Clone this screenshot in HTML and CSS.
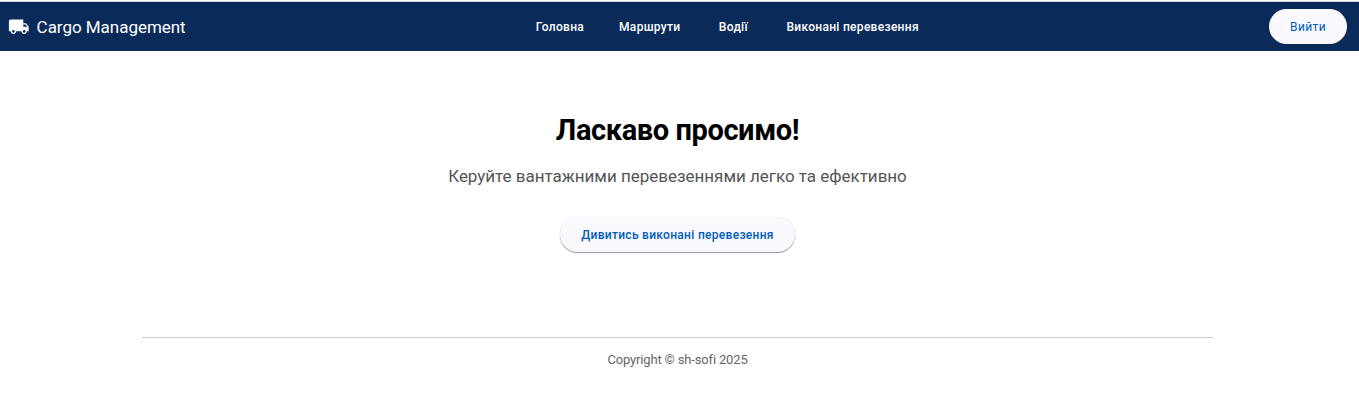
FILE: index.html
```html
<!DOCTYPE html>
<html lang="uk">
<head>
<meta charset="utf-8">
<title>Cargo Management</title>
<link rel="stylesheet" href="styles.css">
</head>
<body>
<header class="toolbar">
  <div class="brand">
    <svg class="brand-icon" viewBox="0 0 24 24"><path d="M20 8h-3V4H3c-1.100 0-2 .9-2 2v11h2c0 1.660 1.340 3 3 3s3-1.340 3-3h6c0 1.660 1.340 3 3 3s3-1.340 3-3h2v-5l-3-4zM6 18.500c-.83 0-1.500-.67-1.500-1.500s.67-1.500 1.500-1.500 1.500.67 1.500 1.500-.67 1.500-1.500 1.500zm13.500-9l1.960 2.500H17V9.500h2.500zm-1.500 9c-.83 0-1.500-.67-1.500-1.500s.67-1.500 1.500-1.500 1.500.67 1.500 1.500-.67 1.500-1.500 1.500z"/></svg>
    <span class="brand-name">Cargo Management</span>
  </div>
  <nav class="nav">
    <a class="nav-link">Головна</a>
    <a class="nav-link">Маршрути</a>
    <a class="nav-link">Водії</a>
    <a class="nav-link">Виконані перевезення</a>
  </nav>
  <button class="button logout">Вийти</button>
</header>
<main class="welcome">
  <h1 class="title">Ласкаво просимо!</h1>
  <p class="subtitle">Керуйте вантажними перевезеннями легко та ефективно</p>
  <button class="button raised">Дивитись виконані перевезення</button>
</main>
<footer class="footer">Copyright © sh-sofi 2025</footer>
</body>
</html>
```
FILE: styles.css
```css
* { box-sizing: border-box; }
body { margin: 0; padding-top: 1px; background: #fff; font-family: Roboto, sans-serif; overflow: hidden; }
.toolbar {
  display: flex;
  justify-content: space-between;
  align-items: center;
  height: 50px;
  padding: 0 12px 0 8px;
  border-top: 1px solid #cdd5d8;
  background: #0a2a5a;
  color: #fff;
}
.brand { display: flex; align-items: center; gap: 7px; }
.brand-icon { width: 21.600px; height: 21.600px; fill: currentColor; }
.brand-name { font-size: 17px; line-height: 24px; letter-spacing: -0.03px; }
.nav { display: flex; gap: 35px; }
.nav-link { min-width: 36px; text-align: center; font-size: 12px; font-weight: 500; letter-spacing: 0.3px; white-space: nowrap; }
.button {
  height: 35px;
  padding: 0 21px;
  border: 0;
  border-radius: 18px;
  background: #faf9fd;
  color: #005cbb;
  font: 500 12px Roboto, sans-serif;
  letter-spacing: 0.3px;
}
.logout { width: 78px; font-weight: 400; letter-spacing: 0.4px; }
.welcome { display: flex; flex-direction: column; align-items: center; padding: 61px 4px 0 0; }
.title { margin: 0; font-size: 29px; line-height: 36px; font-weight: 700; letter-spacing: -0.400px; }
.subtitle { margin: 16px 0 29px; font-size: 17px; line-height: 24px; letter-spacing: -0.02px; color: #555; }
.raised { box-shadow: 0 1px 1px rgba(0, 0, 0, 0.4), 0 0 1px rgba(0, 0, 0, 0.12); }
.footer {
  width: 1071px;
  margin: 85px 0 0 142px;
  padding-top: 12px;
  border-top: 1px solid #ccc;
  text-align: center;
  font-size: 13px;
  letter-spacing: -0.160px;
  line-height: 20px;
  color: #666;
}
```
